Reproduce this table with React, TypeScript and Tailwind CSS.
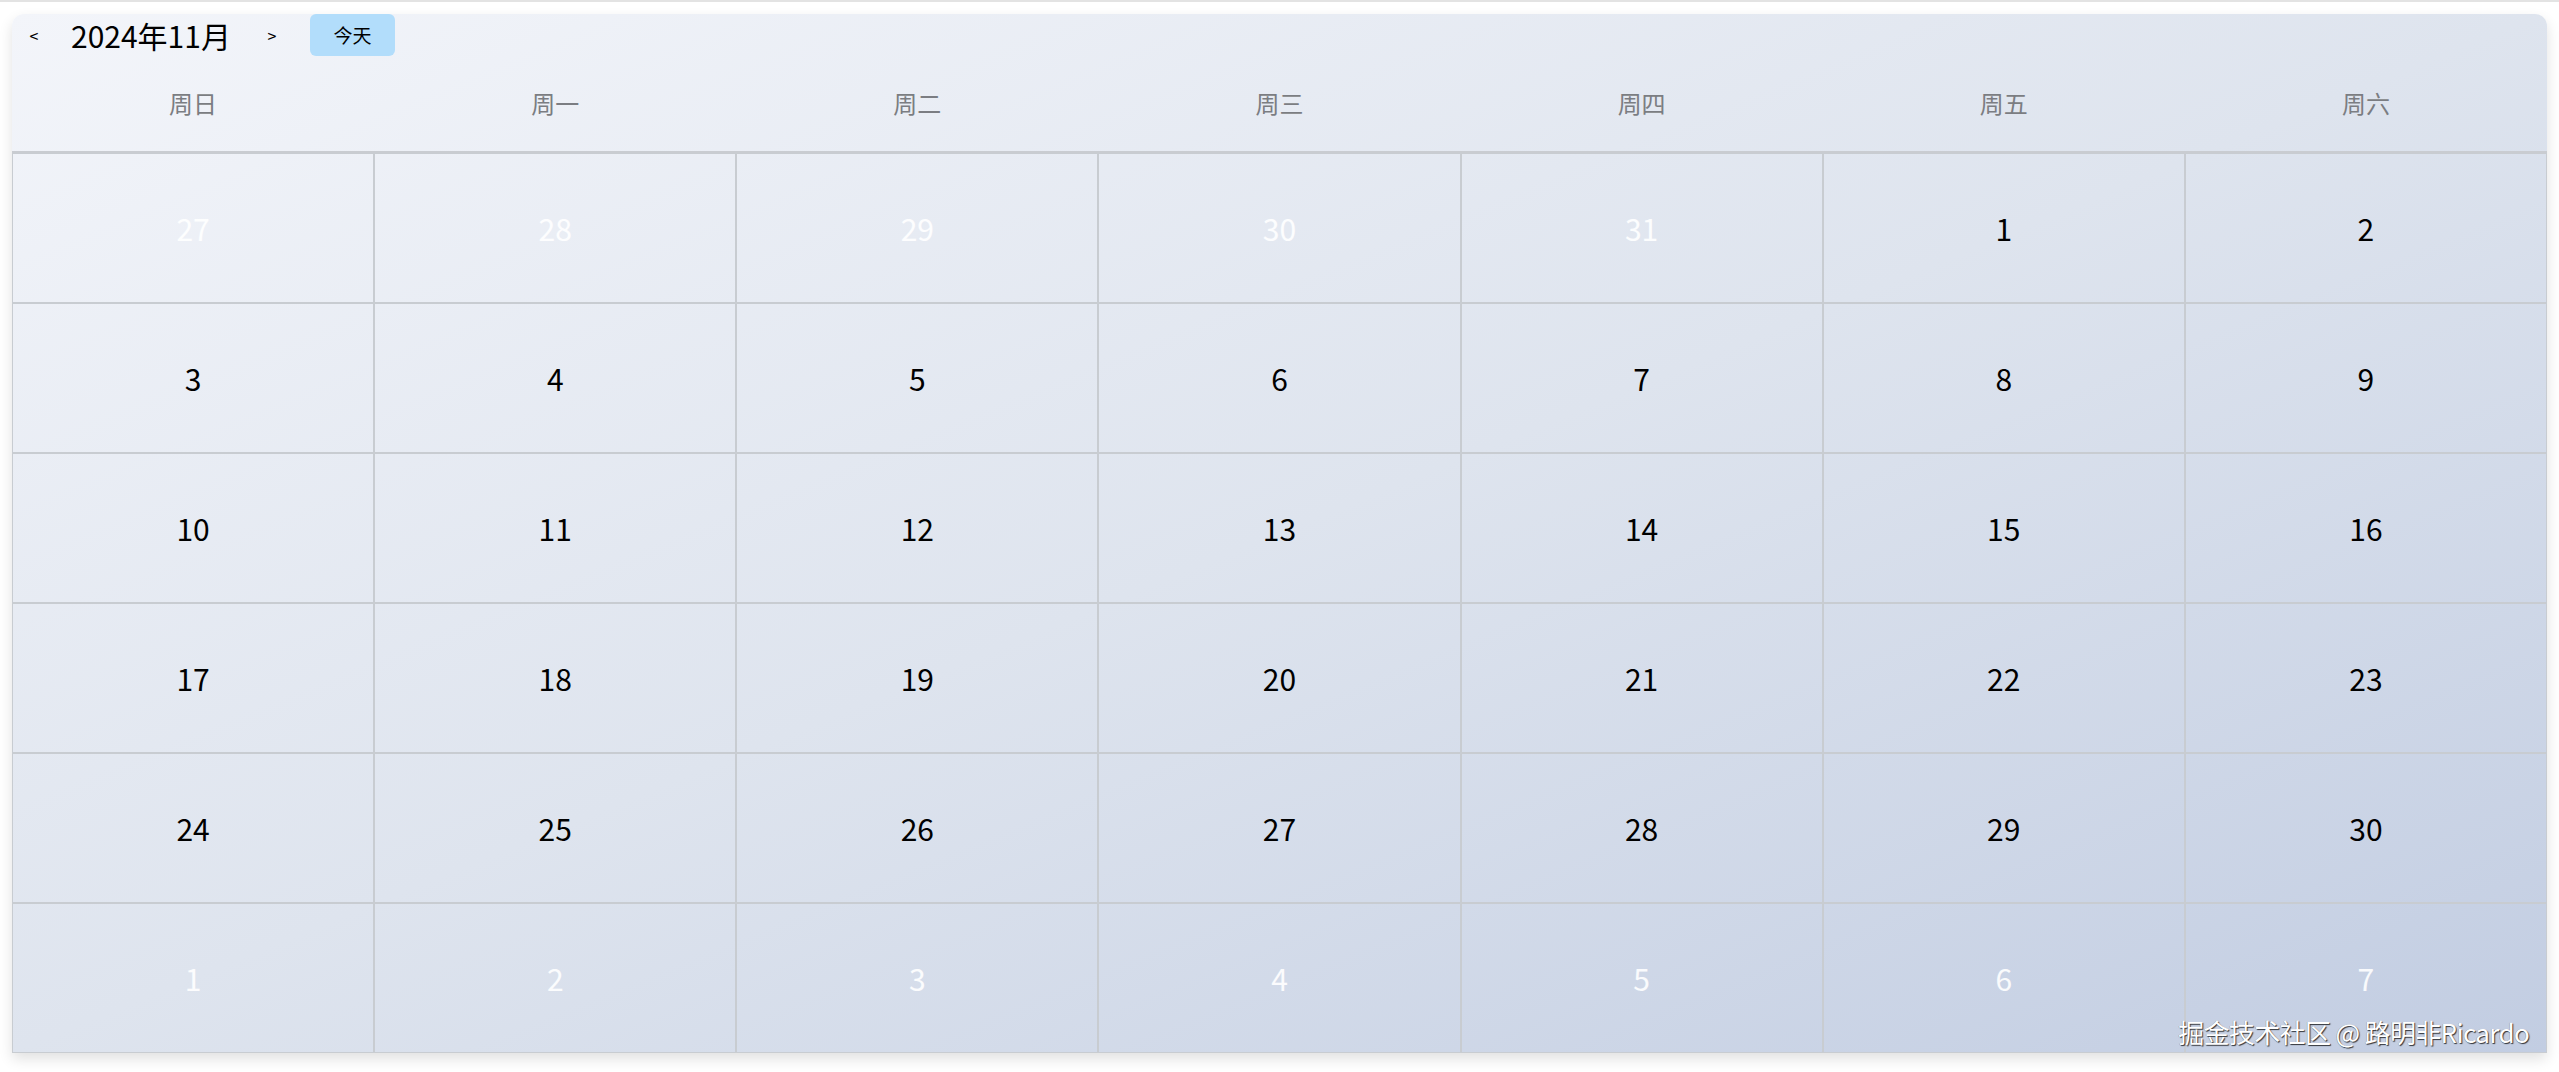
import React from "react";

const weekdays = ["周日", "周一", "周二", "周三", "周四", "周五", "周六"];

type Cell = { d: number; cur: boolean };

function buildCells(): Cell[] {
  const cells: Cell[] = [];
  [27, 28, 29, 30, 31].forEach((d) => cells.push({ d, cur: false }));
  for (let d = 1; d <= 30; d++) cells.push({ d, cur: true });
  for (let d = 1; d <= 7; d++) cells.push({ d, cur: false });
  return cells;
}

export default function App() {
  const cells = buildCells();
  return (
    <div
      className="w-[2559px] h-[1072px] bg-white border-t-2 border-[#e3e3e3] px-3 pt-3 overflow-hidden"
      style={{ fontFamily: '"Noto Sans CJK SC", "Noto Sans", sans-serif' }}
    >
      <div className="relative w-full h-[1039px] rounded-t-xl bg-gradient-to-br from-[#f3f5fa] via-[#dee4ee] to-[#c2cde2] shadow-[0_6px_14px_rgba(0,0,0,0.12)] flex flex-col">
        <div className="h-[42px] flex items-center pl-[15px]">
          <span className="text-[16px] text-black w-[14px] text-center">&lt;</span>
          <span className="ml-[30px] text-[30px] leading-none text-black">2024年11月</span>
          <span className="ml-[34px] text-[16px] text-black w-[14px] text-center">&gt;</span>
          <button className="ml-[31px] self-start h-[42px] w-[85px] rounded-md bg-[#b2ddfb] text-[19px] text-black flex items-center justify-center">
            今天
          </button>
        </div>
        <div className="h-[97px] grid grid-cols-7 items-center border-b-2 border-[#c9ccd1]">
          {weekdays.map((w) => (
            <div key={w} className="text-center text-[24px] text-[#7b7d82] pb-[2px]">
              {w}
            </div>
          ))}
        </div>
        <div className="flex-1 grid grid-cols-7 grid-rows-6">
          {cells.map((c, i) => (
            <div
              key={i}
              className="border border-[#c8ccd1] flex items-center justify-center"
            >
              <span
                className={
                  "text-[30px] leading-none " + (c.cur ? "text-black" : "text-white/90")
                }
              >
                {c.d}
              </span>
            </div>
          ))}
        </div>
        <div
          className="absolute right-[18px] bottom-[8px] text-[26px] text-white leading-none tracking-tight"
          style={{
            textShadow: "1px 1px 1px rgba(0,0,0,0.75), -0.5px -0.5px 0 rgba(0,0,0,0.3)",
          }}
        >
          掘金技术社区 @ 路明非Ricardo
        </div>
      </div>
    </div>
  );
}
